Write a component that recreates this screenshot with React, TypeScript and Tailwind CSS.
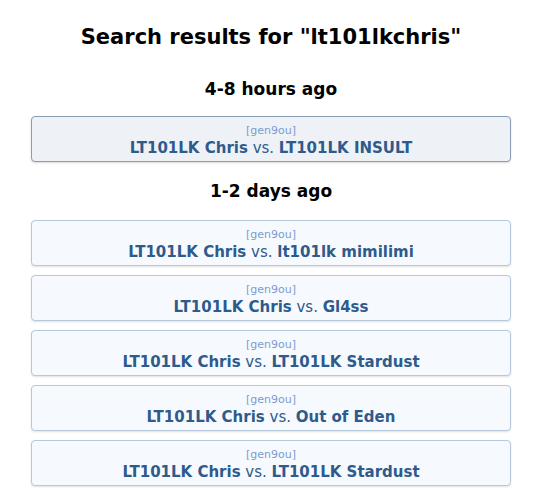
import React from "react";

type Battle = { p1: string; p2: string };

const Card = ({ b, active }: { b: Battle; active?: boolean }) => (
  <a
    className={
      active
        ? "block w-[480px] h-[46px] rounded-[4px] border border-[#8a9db3] bg-[#eef2f7] text-center shadow-[0_1px_2px_rgba(0,0,0,0.15)] pt-[7px]"
        : "block w-[480px] h-[46px] rounded-[4px] border border-[#b6c8dc] bg-[#f6fafe] text-center shadow-[0_1px_2px_rgba(0,0,0,0.12)] pt-[7px]"
    }
  >
    <div className="text-[11px] leading-[14px] text-[#7d9ad0]">[gen9ou]</div>
    <div className="text-[15px] leading-[20px] text-[#2f5a8c]">
      <strong>{b.p1}</strong> vs. <strong>{b.p2}</strong>
    </div>
  </a>
);

export default function App() {
  const recent: Battle[] = [{ p1: "LT101LK Chris", p2: "LT101LK INSULT" }];
  const older: Battle[] = [
    { p1: "LT101LK Chris", p2: "lt101lk mimilimi" },
    { p1: "LT101LK Chris", p2: "Gl4ss" },
    { p1: "LT101LK Chris", p2: "LT101LK Stardust" },
    { p1: "LT101LK Chris", p2: "Out of Eden" },
    { p1: "LT101LK Chris", p2: "LT101LK Stardust" },
  ];
  return (
    <div
      className="w-[533px] h-[499px] bg-white text-black overflow-hidden"
      style={{ fontFamily: '"DejaVu Sans", Verdana, sans-serif' }}
    >
      <div className="ml-[31px] w-[480px] flex flex-col">
        <h1 className="text-[21px] font-bold text-center mt-[23px] leading-[28px]">
          Search results for "lt101lkchris"
        </h1>
        <h3 className="text-[17px] font-bold text-center mt-[27px] leading-[22px]">4-8 hours ago</h3>
        <div className="mt-[16px] flex flex-col gap-[9px]">
          {recent.map((b, i) => (
            <Card key={i} b={b} active />
          ))}
        </div>
        <h3 className="text-[17px] font-bold text-center mt-[18px] leading-[22px]">1-2 days ago</h3>
        <div className="mt-[18px] flex flex-col gap-[9px]">
          {older.map((b, i) => (
            <Card key={i} b={b} />
          ))}
        </div>
      </div>
    </div>
  );
}
